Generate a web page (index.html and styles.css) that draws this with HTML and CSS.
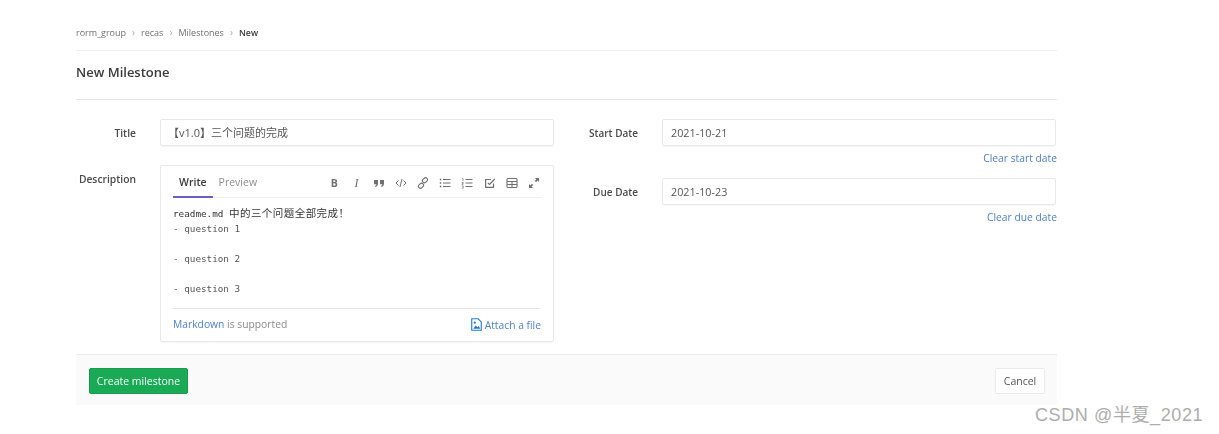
FILE: index.html
```html
<!DOCTYPE html>
<html lang="en">
<head>
<meta charset="utf-8">
<title>New Milestone</title>
<link rel="stylesheet" href="styles.css">
</head>
<body>
<main class="page">
  <nav class="crumbs">
    <a>rorm_group</a><span class="sep">›</span>
    <a>recas</a><span class="sep">›</span>
    <a>Milestones</a><span class="sep">›</span>
    <b>New</b>
  </nav>
  <h1 class="heading">New Milestone</h1>
  <form class="form">
    <div class="col col-left">
      <div class="row">
        <label class="label">Title</label>
        <div class="field"><div class="input input-title">【v1.0】三个问题的完成</div></div>
      </div>
      <div class="row row-desc">
        <label class="label label-desc">Description</label>
        <div class="editor">
          <div class="tabs">
            <span class="tab tab-active">Write</span>
            <span class="tab">Preview</span>
            <div class="tools">
              <span class="tool tool-b">B</span>
              <span class="tool tool-i">I</span>
              <svg class="tool" viewBox="0 0 12 12"><path d="M1 3h4v3.500C5 8.500 4 9.500 2.500 10L2 9c.8-.3 1.300-.9 1.400-1.700H1zM7 3h4v3.500C11 8.500 10 9.500 8.500 10L8 9c.8-.3 1.300-.9 1.400-1.700H7z" fill="#707070"/></svg>
              <svg class="tool" viewBox="0 0 12 12" fill="none" stroke="#707070"><path d="M3.500 3.500 1 6l2.500 2.500M8.500 3.500 11 6 8.500 8.500M7 2 5 10"/></svg>
              <svg class="tool" viewBox="0 0 12 12" fill="none" stroke="#707070" stroke-width="1.100"><rect x="5.200" y="1.200" width="5.500" height="4" rx="2" transform="rotate(-45 8 3.200)"/><rect x="1.300" y="6.800" width="5.500" height="4" rx="2" transform="rotate(-45 4 8.800)"/></svg>
              <svg class="tool" viewBox="0 0 12 12" fill="none" stroke="#707070"><path d="M4 2.500h7.500M4 6h7.500M4 9.500h7.500"/><path d="M.8 2.500h1.500M.8 6h1.500M.8 9.500h1.500" stroke-width="1.500"/></svg>
              <svg class="tool" viewBox="0 0 12 12" fill="none" stroke="#707070"><path d="M4.500 2.500h7M4.500 6h7M4.500 9.500h7"/><path d="M1 1.500h1v2.500M.8 5.500h1.400v1.200H1v1h1.300M.8 9h1.400v2.200H.8" stroke-width=".7"/></svg>
              <svg class="tool" viewBox="0 0 12 12" fill="none" stroke="#707070" stroke-width="1.200"><path d="M9.500 6.500v3.900H1.600V2.500h5.400"/><path d="M3.800 5.800 5.500 7.500 10.800 2"/></svg>
              <svg class="tool" viewBox="0 0 12 12" fill="none" stroke="#707070" stroke-width="1.100"><rect x="1" y="1.500" width="10" height="9" rx="1"/><path d="M1 4.500h10M6 4.500v6M1 7.500h10"/></svg>
              <svg class="tool" viewBox="0 0 12 12" fill="#707070"><path d="M7 1h4v4L9.600 3.600 8 5.200 6.800 4 8.400 2.400zM5 11H1V7l1.400 1.400L4 6.800 5.200 8 3.600 9.600z"/></svg>
            </div>
          </div>
          <div class="source"><span class="ink">readme.md</span> <span class="cjk">中的三个问题全部完成！</span>
- question 1

- question 2

- question 3</div>
          <div class="editor-foot">
            <span class="hint"><a class="link">Markdown</a> is supported</span>
            <a class="link attach">
              <svg class="attach-icon" viewBox="0 0 12 14" fill="none" stroke="#1f78d1"><path d="M.8.800h7l3.400 3.400v9H.8z" stroke-width="1.200"/><path d="M2.500 11.500 5 8l2 2 1.500-1.500 1.500 3z" fill="#1f78d1" stroke="none"/><circle cx="4" cy="5" r="1.200" fill="#1f78d1" stroke="none"/></svg>
              Attach a file
            </a>
          </div>
        </div>
      </div>
    </div>
    <div class="col">
      <div class="row row-date">
        <label class="label">Start Date</label>
        <div class="field">
          <div class="input input-date">2021-10-21</div>
          <a class="link clear">Clear start date</a>
        </div>
      </div>
      <div class="row row-date">
        <label class="label">Due Date</label>
        <div class="field">
          <div class="input input-date">2021-10-23</div>
          <a class="link clear">Clear due date</a>
        </div>
      </div>
    </div>
  </form>
  <footer class="actions">
    <button type="button" class="btn btn-create">Create milestone</button>
    <button type="button" class="btn btn-cancel">Cancel</button>
  </footer>
</main>
<div class="watermark">CSDN @半夏_2021</div>
</body>
</html>
```
FILE: styles.css
```css
* { box-sizing: border-box; }
html, body { margin: 0; padding: 0; }
body {
  background: #fff;
  height: 434px;
  overflow: hidden;
  position: relative;
  font-family: "Open Sans", "Noto Sans CJK SC", sans-serif;
  font-size: 10.300px;
  color: #4f4f4f;
}
.page { width: 981px; margin-left: 76px; filter: blur(.3px); }
.crumbs {
  height: 51px;
  padding-top: 25px;
  display: flex;
  align-items: baseline;
  font-size: 9px;
  line-height: 14px;
  color: #707070;
  border-bottom: 1px solid #efefef;
}
.sep { margin: 0 6px; color: #aaa; font-size: 10px; }
.crumbs b { font-weight: 600; font-size: 8.800px; color: #3d3d3d; }
.heading {
  margin: 0;
  height: 49px;
  border-bottom: 1px solid #e5e5e5;
  font-size: 13px;
  font-weight: 600;
  line-height: 43px;
  color: #3a3a3a;
}
.form { display: flex; gap: 24px; padding-top: 19px; height: 254px; }
.col { width: 478px; }
.row { display: flex; gap: 24px; }
.row-desc { margin-top: 18px; }
.row-date { height: 59px; }
.row-date .label { font-size: 10px; }
.label {
  width: 60px;
  flex: none;
  text-align: right;
  font-weight: 600;
  line-height: 28px;
  color: #4a4a4a;
}
.field { width: 394px; }
.input {
  height: 27px;
  border: 1px solid #e8e8e8;
  border-radius: 2px;
  padding-left: 6px;
  font-size: 10.800px;
  line-height: 26px;
  color: #555;
  box-shadow: 0 1px 1px rgba(0,0,0,.03);
}
.input-title { font-size: 11px; padding-left: 7px; }
.input-date { padding-left: 8px; }
.clear { display: block; text-align: right; margin-top: 5px; line-height: 14px; margin-right: -1px; }
.link { color: #4f7fc9; }
.editor {
  width: 394px;
  height: 177px;
  border: 1px solid #e8e8e8;
  border-radius: 2px;
  padding: 0 12px;
  box-shadow: 0 1px 1px rgba(0,0,0,.03);
}
.tabs {
  height: 32px;
  display: flex;
  align-items: center;
  border-bottom: 1px solid #efefef;
}
.tab { padding: 0 6px; height: 32px; line-height: 32px; color: #8d8d8d; font-size: 10.500px; }
.tab-active {
  font-weight: 600;
  color: #3a3a3a;
  border-bottom: 2px solid #6b5fc7;
}
.tools { margin-left: auto; display: flex; gap: 10.200px; padding: 3px 1px 0 0; }
.tool {
  width: 12px;
  height: 12px;
  line-height: 12px;
  text-align: center;
  color: #707070;
  font-size: 10.500px;
  display: block;
  flex: none;
}
.tool-b { font-weight: 700; }
.tool-i { font-family: "Liberation Serif", serif; font-style: italic; font-size: 12px; }
.source {
  height: 110px;
  padding-top: 7px;
  white-space: pre;
  font-family: "DejaVu Sans Mono", monospace;
  font-size: 9.300px;
  line-height: 15px;
  color: #555;
}
.ink { color: #333; }
.cjk { font-family: "Noto Sans CJK SC", sans-serif; font-size: 10.500px; letter-spacing: .45px; color: #333; }
.editor-foot {
  height: 31px;
  border-top: 1px solid #e5e5e5;
  display: flex;
  justify-content: space-between;
  align-items: center;
}
.hint { color: #8a8a8a; }
.attach { display: flex; align-items: center; gap: 3px; padding-top: 1px; }
.attach-icon { width: 11px; height: 13px; }
.actions {
  height: 51px;
  background: #fafafa;
  border-top: 1px solid #ececec;
  padding: 13px 12px 0 13px;
  display: flex;
  justify-content: space-between;
  align-items: flex-start;
}
.btn {
  height: 26px;
  border-radius: 2px;
  font: inherit;
  padding: 0;
}
.btn-create { width: 99px; background: #1aaa55; border: 1px solid #189c4e; color: #f2fff7; font-size: 10.500px; }
.btn-cancel { width: 50px; background: #fff; border: 1px solid #eaeaea; color: #555; font-size: 10.500px; }
.watermark {
  position: absolute;
  left: 1035px;
  top: 404px;
  font-family: "Liberation Sans", "Noto Sans CJK SC", sans-serif;
  font-size: 18px;
  letter-spacing: .6px;
  line-height: 22px;
  color: #adadad;
}
```
